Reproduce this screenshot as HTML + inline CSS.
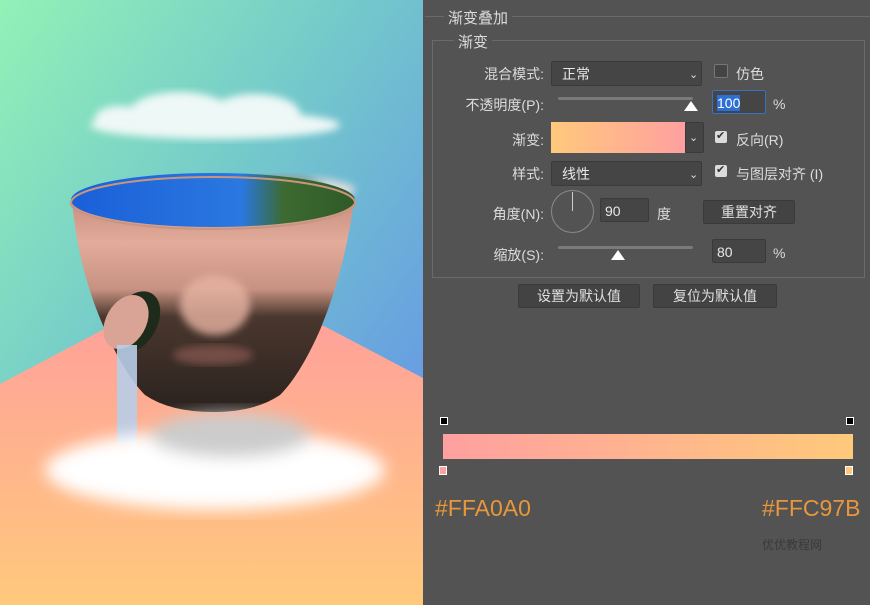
<!DOCTYPE html>
<html><head><meta charset="utf-8"><style>
body{margin:0;width:870px;height:605px;overflow:hidden;background:#535353;font-family:"Liberation Sans","Noto Sans CJK SC",sans-serif;position:relative}
#L{position:absolute;left:0;top:0;width:423px;height:605px}
.t{position:absolute;color:#dcdcdc;font-size:14px;white-space:nowrap}
.r{text-align:right}
.box{position:absolute;background:#454545;border:1px solid #3a3a3a;border-radius:2px;color:#e8e8e8;font-size:14px}
.btn{position:absolute;background:#434343;border:1px solid #3a3a3a;border-radius:2px;color:#e0e0e0;font-size:14px;text-align:center;line-height:22px}
.chk{position:absolute;width:12px;height:12px;border-radius:2px;background:#dcdcdc}
.sl{position:absolute;height:3px;background:#7a7a7a;border-radius:2px}
.th{position:absolute;width:0;height:0;border-left:7px solid transparent;border-right:7px solid transparent;border-bottom:10px solid #fff}
.car{position:absolute;color:#ddd;font-size:11px}
</style></head><body>
<svg id="L" viewBox="0 0 423 605" xmlns="http://www.w3.org/2000/svg">
<defs>
<linearGradient id="bg" x1="0" y1="0" x2="1" y2="1"><stop offset="0" stop-color="#92f2b6"/><stop offset=".45" stop-color="#72c6cc"/><stop offset="1" stop-color="#6288ee"/></linearGradient>
<linearGradient id="pe" x1="0" y1="0" x2="0" y2="1"><stop offset="0" stop-color="#ffa29a"/><stop offset="1" stop-color="#ffc97c"/></linearGradient>
<linearGradient id="sk" x1="0" y1="0" x2="0" y2="1"><stop offset="0" stop-color="#c98e80"/><stop offset=".2" stop-color="#e2ab9a"/><stop offset=".42" stop-color="#c89282"/><stop offset=".55" stop-color="#4a372e"/><stop offset="1" stop-color="#2a221e"/></linearGradient>
<linearGradient id="wa" x1="0" y1="0" x2="1" y2="0"><stop offset="0" stop-color="#1a5fd8"/><stop offset=".6" stop-color="#2a78e0"/><stop offset=".75" stop-color="#3c6a30"/><stop offset="1" stop-color="#2f5a28"/></linearGradient>
<filter id="b4"><feGaussianBlur stdDeviation="4"/></filter>
<filter id="b8"><feGaussianBlur stdDeviation="8"/></filter>
</defs>
<rect width="423" height="605" fill="url(#bg)"/>
<polygon points="0,384 110,326 324,326 423,378 423,605 0,605" fill="url(#pe)"/>
<g filter="url(#b4)" fill="#eef8f6"><ellipse cx="215" cy="125" rx="125" ry="14"/><ellipse cx="180" cy="112" rx="50" ry="20"/><ellipse cx="255" cy="114" rx="45" ry="20"/><ellipse cx="120" cy="118" rx="25" ry="12"/></g>
<g filter="url(#b4)" fill="#ddd"><ellipse cx="300" cy="190" rx="55" ry="12"/><ellipse cx="285" cy="190" rx="40" ry="14" fill="#999"/></g>
<path d="M72,200 Q78,270 105,330 Q125,375 145,395 Q170,412 213,412 Q255,412 280,395 Q300,375 320,330 Q345,270 354,200 Z" fill="url(#sk)"/>
<ellipse cx="215" cy="305" rx="35" ry="30" fill="#e7b3a2" opacity=".8" filter="url(#b4)"/>
<ellipse cx="213" cy="355" rx="40" ry="10" fill="#8a5a52" opacity=".7" filter="url(#b4)"/>
<ellipse cx="213" cy="200" rx="142" ry="27" fill="url(#wa)"/>
<ellipse cx="213" cy="203" rx="142" ry="26" fill="none" stroke="#c8967e" stroke-width="2"/>
<ellipse cx="135" cy="322" rx="22" ry="33" fill="#1e2a1a" transform="rotate(30 135 322)"/>
<ellipse cx="126" cy="322" rx="20" ry="29" fill="#d9a496" transform="rotate(30 126 322)"/>
<rect x="117" y="345" width="20" height="100" fill="#b8cde8" opacity=".9"/>
<g filter="url(#b8)" fill="#fff"><ellipse cx="215" cy="470" rx="170" ry="40"/><ellipse cx="230" cy="435" rx="80" ry="22" fill="#ccc"/></g>
</svg>
<div style="position:absolute;left:423px;top:0;width:447px;height:605px;background:#535353"></div>
<div style="position:absolute;left:425px;top:16px;width:445px;height:1px;background:#6a6a6a"></div>
<div class="t" style="left:444px;top:7px;background:#535353;padding:0 4px;font-size:15px">渐变叠加</div>
<div style="position:absolute;left:432px;top:40px;width:431px;height:236px;border:1px solid #6a6a6a"></div>
<div class="t" style="left:454px;top:31px;background:#535353;padding:0 4px;font-size:15px">渐变</div>
<div class="t r" style="left:440px;width:104px;top:64px">混合模式:</div>
<div class="box" style="left:551px;top:61px;width:151px;height:25px;line-height:25px;padding-left:10px;box-sizing:border-box">正常</div><div class="car" style="left:689px;top:68px">⌄</div>
<div style="position:absolute;left:714px;top:64px;width:12px;height:12px;border:1px solid #777;border-radius:2px;background:#444"></div>
<div class="t" style="left:736px;top:64px">仿色</div>
<div class="t r" style="left:440px;width:104px;top:95px">不透明度(P):</div>
<div class="sl" style="left:558px;top:97px;width:135px"></div><div class="th" style="left:684px;top:101px"></div>
<div class="box" style="left:712px;top:90px;width:54px;height:24px;border-color:#3b6fbf;line-height:24px;padding-left:4px;box-sizing:border-box"><span style="background:#2c6fd6;color:#fff">100</span></div>
<div class="t" style="left:773px;top:96px">%</div>
<div class="t r" style="left:440px;width:104px;top:130px">渐变:</div>
<div style="position:absolute;left:551px;top:122px;width:134px;height:31px;background:linear-gradient(90deg,#ffc97b,#ffa0a0)"></div>
<div class="box" style="left:685px;top:122px;width:17px;height:29px"></div><div class="car" style="left:689px;top:131px">⌄</div>
<div class="chk" style="left:715px;top:131px"></div><div class="t" style="left:716px;top:129px;color:#333;font-size:11px">✔</div>
<div class="t" style="left:736px;top:130px">反向(R)</div>
<div class="t r" style="left:440px;width:104px;top:164px">样式:</div>
<div class="box" style="left:551px;top:161px;width:151px;height:25px;line-height:25px;padding-left:10px;box-sizing:border-box">线性</div><div class="car" style="left:689px;top:168px">⌄</div>
<div class="chk" style="left:715px;top:165px"></div><div class="t" style="left:716px;top:163px;color:#333;font-size:11px">✔</div>
<div class="t" style="left:736px;top:164px">与图层对齐 (I)</div>
<div class="t r" style="left:440px;width:104px;top:204px">角度(N):</div>
<div style="position:absolute;left:551px;top:190px;width:41px;height:41px;border:1px solid #8a8a8a;border-radius:50%"></div>
<div style="position:absolute;left:572px;top:192px;width:1px;height:19px;background:#ccc"></div>
<div class="box" style="left:600px;top:198px;width:49px;height:24px;line-height:24px;padding-left:4px;box-sizing:border-box">90</div>
<div class="t" style="left:657px;top:204px">度</div>
<div class="btn" style="left:703px;top:200px;width:90px">重置对齐</div>
<div class="t r" style="left:440px;width:104px;top:245px">缩放(S):</div>
<div class="sl" style="left:558px;top:246px;width:135px"></div><div class="th" style="left:611px;top:250px"></div>
<div class="box" style="left:712px;top:239px;width:54px;height:24px;line-height:24px;padding-left:4px;box-sizing:border-box">80</div>
<div class="t" style="left:773px;top:245px">%</div>
<div class="btn" style="left:518px;top:284px;width:120px">设置为默认值</div>
<div class="btn" style="left:653px;top:284px;width:122px">复位为默认值</div>
<div style="position:absolute;left:440px;top:417px;width:6px;height:6px;border:1px solid #fff;background:#000"></div>
<div style="position:absolute;left:846px;top:417px;width:6px;height:6px;border:1px solid #fff;background:#000"></div>
<div style="position:absolute;left:443px;top:434px;width:410px;height:25px;background:linear-gradient(90deg,#ffa0a0,#ffc97b)"></div>
<div style="position:absolute;left:439px;top:466px;width:6px;height:7px;border:1px solid #fff;background:#ffa0a0"></div>
<div style="position:absolute;left:845px;top:466px;width:6px;height:7px;border:1px solid #fff;background:#ffc97b"></div>
<div class="t" style="left:435px;top:495px;color:#e8973a;font-size:23px">#FFA0A0</div>
<div class="t" style="left:762px;top:495px;color:#e8973a;font-size:23px">#FFC97B</div>
<div class="t" style="left:762px;top:536px;color:#3a3a3a;font-size:12px">优优教程网</div>
</body></html>
